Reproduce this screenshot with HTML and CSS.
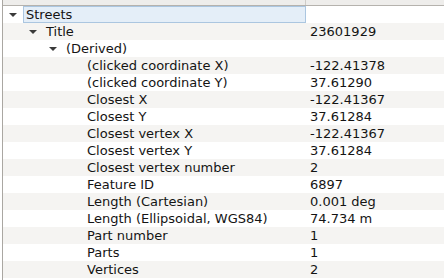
FILE: index.html
```html
<!DOCTYPE html>
<html lang="en">
<head>
  <title>Identify Results</title>
  <link rel="stylesheet" href="styles.css">
</head>
<body>

  <div class="tree">
    <!-- Column headers (scrolled, only bottom edge visible) -->
    <div class="header">
      <div class="head-cell">Feature</div>
      <div class="head-cell">Value</div>
    </div>

    <div class="rows">
      <div class="row">
        <div class="name lvl0"><span class="arrow"></span><span class="label selected">Streets</span></div>
        <div class="value"></div>
      </div>
      <div class="row">
        <div class="name lvl1"><span class="arrow"></span><span class="label">Title</span></div>
        <div class="value">23601929</div>
      </div>
      <div class="row">
        <div class="name lvl2"><span class="arrow"></span><span class="label">(Derived)</span></div>
        <div class="value"></div>
      </div>
      <div class="row">
        <div class="name leaf">(clicked coordinate X)</div>
        <div class="value">-122.41378</div>
      </div>
      <div class="row">
        <div class="name leaf">(clicked coordinate Y)</div>
        <div class="value">37.61290</div>
      </div>
      <div class="row">
        <div class="name leaf">Closest X</div>
        <div class="value">-122.41367</div>
      </div>
      <div class="row">
        <div class="name leaf">Closest Y</div>
        <div class="value">37.61284</div>
      </div>
      <div class="row">
        <div class="name leaf">Closest vertex X</div>
        <div class="value">-122.41367</div>
      </div>
      <div class="row">
        <div class="name leaf">Closest vertex Y</div>
        <div class="value">37.61284</div>
      </div>
      <div class="row">
        <div class="name leaf">Closest vertex number</div>
        <div class="value">2</div>
      </div>
      <div class="row">
        <div class="name leaf">Feature ID</div>
        <div class="value">6897</div>
      </div>
      <div class="row">
        <div class="name leaf">Length (Cartesian)</div>
        <div class="value">0.001 deg</div>
      </div>
      <div class="row">
        <div class="name leaf">Length (Ellipsoidal, WGS84)</div>
        <div class="value">74.734 m</div>
      </div>
      <div class="row">
        <div class="name leaf">Part number</div>
        <div class="value">1</div>
      </div>
      <div class="row">
        <div class="name leaf">Parts</div>
        <div class="value">1</div>
      </div>
      <div class="row">
        <div class="name leaf">Vertices</div>
        <div class="value">2</div>
      </div>
      <div class="row filler">
        <div class="name"></div>
        <div class="value"></div>
      </div>
    </div>
  </div>

</body>
</html>
```

FILE: styles.css
```css
body {
  margin: 0;
  background: #ffffff;
  font-family: "DejaVu Sans", "Noto Sans", sans-serif;
  font-size: 13px;
  color: #141414;
  overflow: hidden;
}

.tree {
  margin-left: 2px;
  border-left: 1px solid #aaa7a2;
  height: 280px;
  overflow: hidden;
}

.header {
  display: grid;
  grid-template-columns: 303px 1fr;
  height: 22px;
  margin-top: -17px;
  background: #eeedeb;
  border-bottom: 1px solid #b5b2ad;
}

.head-cell {
  padding: 3px 4px 0;
  line-height: 17px;
  color: #222;
}

.head-cell:first-child {
  border-right: 1px solid #cfccc8;
}

.row {
  display: grid;
  grid-template-columns: 303px 1fr;
  height: 17px;
  line-height: 17px;
}

.row:nth-child(even) {
  background: #f5f4f2;
}

.name {
  display: flex;
  align-items: center;
  white-space: nowrap;
}

.lvl0 { padding-left: 6px; }
.lvl1 { padding-left: 26px; }
.lvl2 { padding-left: 46px; }
.leaf { padding-left: 84px; }

.arrow {
  width: 0;
  height: 0;
  border-left: 4px solid transparent;
  border-right: 4px solid transparent;
  border-top: 4px solid #3a3a3a;
  margin-right: 9px;
}

.lvl0 .arrow {
  margin-right: 6px;
}

.label.selected {
  flex: 1;
  align-self: stretch;
  height: 15px;
  line-height: 15px;
  padding-left: 2px;
  background: #e4eef8;
  border: 1px solid #abc6e0;
}

.value {
  padding-left: 4px;
  white-space: nowrap;
}
```
